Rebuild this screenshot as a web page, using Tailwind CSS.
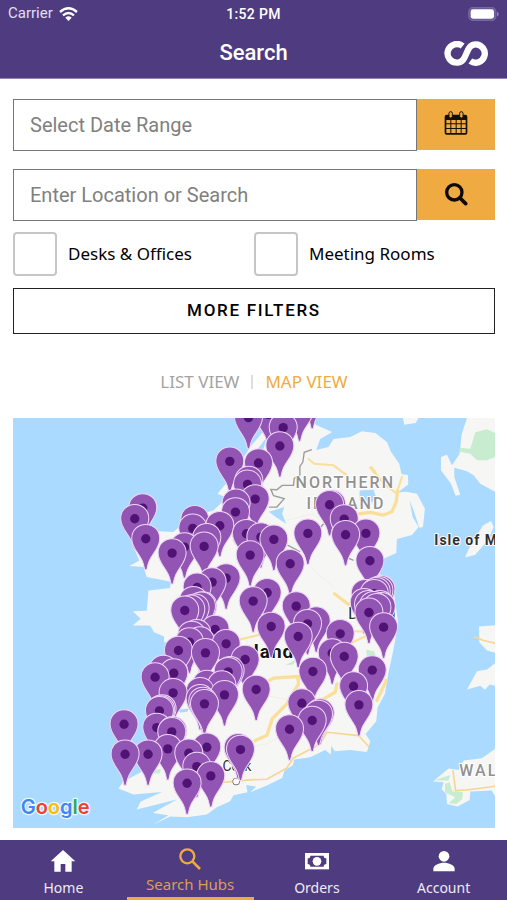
<!DOCTYPE html>
<html lang="en">
<head>
<meta charset="utf-8">
<meta name="viewport" content="width=device-width, initial-scale=1">
<title>Search</title>
<script src="https://cdn.jsdelivr.net/npm/@tailwindcss/browser@4"></script>
</head>
<body class="flex min-h-screen flex-col bg-white font-['Inter',sans-serif] text-black">

<header class="border-b border-[#8f82b3] bg-[#4f3c80] text-white">
  <div class="grid h-7 grid-cols-3 items-center pr-2 pl-2 text-sm">
    <div class="flex items-center gap-1.5 text-[#e3dff0]">
      <span class="font-['Roboto',sans-serif] text-[15px]">Carrier</span>
      <svg class="h-3.5 w-[19px]" viewBox="0 0 57 42" aria-label="Wi-Fi">
        <g fill="none" stroke="#fff" stroke-width="7"><path d="M3 15Q28.500-7 54 15"/><path d="M12 25Q28.500 11 45 25"/></g>
        <path d="M19 32Q28.500 24 38 32L28.500 42Z" fill="#fff"/>
      </svg>
    </div>
    <span class="text-center font-['Roboto',sans-serif] font-medium tracking-wide">1:52 PM</span>
    <svg class="h-3.5 w-[31px] justify-self-end" viewBox="0 0 93 42" aria-label="Battery">
      <rect x="2" y="1" width="82" height="40" rx="13" fill="#6a5a95" stroke="#8679a9" stroke-width="2"/>
      <rect x="8" y="7" width="70" height="28" rx="7" fill="#fff"/>
      <path d="M87 14Q92 16 92 21T87 28Z" fill="#9186b1"/>
    </svg>
  </div>
  <div class="grid h-[50px] grid-cols-3 items-center px-[18px]">
    <h1 class="col-start-2 text-center font-['Roboto',sans-serif] text-[22px] leading-7 font-medium">Search</h1>
    <svg class="h-[25px] w-[45px] justify-self-end" viewBox="0 0 135 75" fill="none" stroke="#fff" stroke-width="19" aria-label="Logo">
      <path d="M56 15A28 28 0 1 0 40 65C72 65 62 10 95 10A27.500 27.500 0 1 1 79 60"/>
    </svg>
  </div>
</header>

<main class="flex-1 pt-5 pr-3 pb-3 pl-[13px]">
  <form class="flex flex-col" onsubmit="return false">
    <div class="flex h-[52px]">
      <input aria-label="Select Date Range" placeholder="Select Date Range" class="min-w-0 flex-1 border border-[#777] px-4 font-['Roboto',sans-serif] text-[20px] outline-none placeholder:text-[#808080]">
      <button type="button" aria-label="Open calendar" class="mb-px flex w-[78px] items-center justify-center bg-[#efab41] pb-1">
        <svg class="size-6" viewBox="0 0 72 72">
          <rect x="2" y="11" width="68" height="60" rx="6" fill="#151006"/>
          <path d="M7 27H19V37H7ZM22 27H35V37H22ZM38 27H50V37H38ZM53 27H65V37H53ZM7 40H19V51H7ZM22 40H35V51H22ZM38 40H50V51H38ZM53 40H65V51H53ZM7 54H19V66H7ZM22 54H35V66H22ZM38 54H50V66H38ZM53 54H65V66H53Z" fill="#efab41"/>
          <g fill="#efab41" stroke="#151006" stroke-width="3"><rect x="15" y="2" width="10" height="19" rx="5"/><rect x="47" y="2" width="10" height="19" rx="5"/></g>
        </svg>
      </button>
    </div>
    <div class="mt-[18px] flex h-[52px]">
      <input aria-label="Enter Location or Search" placeholder="Enter Location or Search" class="min-w-0 flex-1 border border-[#777] px-4 font-['Roboto',sans-serif] text-[20px] outline-none placeholder:text-[#808080]">
      <button type="submit" aria-label="Search" class="mb-px flex w-[78px] items-center justify-center bg-[#efab41] pb-0.5">
        <svg class="size-6" viewBox="0 0 72 72" fill="none" stroke="#0d0a04"><circle cx="31" cy="31" r="23" stroke-width="10"/><path d="M48 48L65 65" stroke-width="11" stroke-linecap="round"/></svg>
      </button>
    </div>
    <div class="mt-[11px] grid grid-cols-2 font-['Noto_Sans',sans-serif] text-[17px]">
      <label class="flex items-center gap-[11px]"><input type="checkbox" class="size-11 appearance-none rounded-[4px] border-2 border-[#c6c6c6] bg-white checked:bg-[#4f3c80]">Desks &amp; Offices</label>
      <label class="flex items-center gap-[11px]"><input type="checkbox" class="size-11 appearance-none rounded-[4px] border-2 border-[#c6c6c6] bg-white checked:bg-[#4f3c80]">Meeting Rooms</label>
    </div>
    <button type="button" class="mt-3 h-[46px] border border-[#222] font-['Roboto',sans-serif] text-[17px] font-medium tracking-widest">MORE FILTERS</button>
  </form>

  <div class="mt-9 flex h-6 items-center justify-center font-['Noto_Sans',sans-serif] text-[17px]">
    <a href="#list" class="text-[#a3a3a3]">LIST VIEW</a>
    <span class="mx-3 h-3.5 w-0.5 bg-[#dedede]"></span>
    <a href="#map" class="text-[#efab41]">MAP VIEW</a>
  </div>

  <section id="map" class="mt-6" aria-label="Map of hubs">
    <svg class="block w-full" viewBox="39 23 1445 1230">
      <defs>
        <g id="pin">
          <path d="M0-43C24-43 42-25 42-1C42 26 22 42 11 65C6 76 5 84 3 93H-3C-5 84-6 76-11 65C-22 42-42 26-42-1C-42-25-24-43 0-43Z" fill="#9355b3" stroke="#eed8f7" stroke-width="3"/>
          <circle r="14" fill="#501375"/>
        </g>
      </defs>
      <rect x="39" y="23" width="1445" height="1230" fill="#aadaff"/>
      <g fill="#f6f6f5">
        <path d="M830 23H932L948 44L996 65L960 86L948 119L985 110L1000 86L1050 80L1085 63L1125 68L1160 95L1172 124L1197 160L1204 192L1223 194L1224 222L1192 246L1216 244L1250 250L1274 295L1268 350L1257 352L1240 300L1228 270L1237 320L1255 350L1235 374L1190 386L1188 428L1150 445L1138 490L1180 540L1194 640L1178 725L1164 790L1154 850L1132 892L1128 932L1096 970L1110 992L1100 1024L1050 1018L1004 1022L993 1006L992 1032L975 1018L930 1040L882 1047L878 1064L853 1080L846 1102L800 1125L750 1145L768 1128L738 1123L742 1145L700 1154L690 1172L650 1190L620 1212L560 1220L510 1218L460 1242L505 1214L458 1207L530 1167L410 1197L422 1173L486 1144L400 1152L355 1134L370 1113L432 1080L440 990L450 920L470 870L480 790L525 720L540 680L492 696L492 678L462 665L450 645L398 645L422 625L398 602L440 601L445 540L510 533L512 514L440 500L430 470L388 467L418 450L402 415L430 360L520 365L570 320L640 300L680 262L652 250L690 205L750 110L800 50Z"/>
        <path d="M1208 23H1255L1246 38L1212 43ZM1400 23H1484V244L1440 220L1420 195L1400 183L1362 172L1362 200L1380 253L1366 256L1352 220L1322 180L1322 140L1340 133L1355 165L1378 130L1384 72Z"/>
        <path d="M1472 332L1480 350L1462 390L1424 434L1394 441L1410 405L1448 345ZM1436 648L1484 644V727L1460 720L1437 695ZM1484 758V826L1468 822L1454 838L1440 826L1400 837L1430 782L1460 777ZM1484 1015V1157L1474 1140L1410 1143L1408 1168L1372 1188L1340 1180L1338 1150L1324 1136L1330 1115L1298 1113L1345 1074L1375 1078L1390 1050L1444 1043Z"/>
      </g>
      <g fill="#c8ecd0">
        <path d="M1425 66L1460 57L1484 68V140L1460 150L1430 150L1410 130L1378 124V112L1410 115ZM1300 1110L1350 1093L1344 1110ZM1334 1120L1348 1115L1356 1142L1388 1145L1386 1165L1368 1180L1345 1178L1365 1160L1334 1145ZM1098 718L1122 722L1128 745L1100 738ZM855 764L886 748L880 762ZM480 430L508 446L500 462L484 450ZM440 1080L482 1076L480 1088L440 1090Z"/>
      </g>
      <g fill="#aadaff">
        <path d="M1078 240L1120 238L1128 262L1110 280L1078 270ZM806 304L852 290L846 310L858 340L830 322ZM750 145L800 80L790 115L760 140ZM535 898L566 894L562 904L540 906Z"/>
      </g>
      <g fill="none" stroke="#f1eadd" stroke-width="2">
        <path d="M860 330L940 310L980 350L1110 430M690 380L820 560L940 620L1040 660M930 470L1000 530M640 620L740 690L740 800L690 870M860 860L960 860M680 1020L800 1000L870 960M770 850L880 870"/>
      </g>
      <g fill="none" stroke="#f9df99" stroke-linejoin="round" stroke-linecap="round">
        <path stroke-width="10" d="M1112 172L1124 186M1003 550L1045 582M1078 310L1110 306L1150 314L1175 304L1188 274L1192 240M765 990L800 975L816 925L860 880L895 820L893 798L820 803L790 818M1158 810L1130 870M1010 820L1005 845L970 865"/>
        <path stroke-width="6" d="M925 146L942 160L1000 165L1040 195M1124 186L1150 220L1190 250M716 688L790 670M1065 662L1100 664M1056 696L1098 676M1192 240L1205 200"/>
        <path stroke-width="5" stroke="#f7d694" d="M660 1116L750 1108L800 1106L860 1072L880 1042L960 1000L980 965L1075 975L1105 1008M1358 1080L1366 1140L1400 1138L1440 1133L1484 1127M1424 680L1450 690L1484 698"/>
      </g>
      <path d="M935 118L912 126L908 155L899 168V194L882 204L880 225L846 225L830 238L812 237L820 256L852 265L830 290L806 290M970 340L960 352M862 404L900 424M1046 444L1060 450" fill="none" stroke="#9b9b9b" stroke-width="4"/>
      <g class="font-['Roboto',sans-serif]" stroke="#fff" stroke-width="6" stroke-linejoin="round" paint-order="stroke">
        <g fill="#919191" font-size="48" font-weight="500" letter-spacing="6">
          <text x="886" y="234">NORTHERN</text>
          <text x="919" y="296">IRELAND</text>
          <text x="1377" y="1095">WALES</text>
        </g>
        <g fill="#303030">
          <text x="1302" y="405" font-size="42" font-weight="700" letter-spacing="3">Isle of Man</text>
          <text x="1043" y="627" font-size="51">Dublin</text>
          <text x="684" y="742" font-size="57" font-weight="700" letter-spacing="3" fill="#151515">Ireland</text>
          <text x="667" y="1080" font-size="42">Cork</text>
          <circle cx="708" cy="1113" r="9" fill="#fff" stroke="#555" stroke-width="4"/>
        </g>
      </g>
      <g id="pins"></g>
      <text x="62" y="1210" font-size="60" font-weight="600" class="font-['Inter',sans-serif]" stroke="#e9f5ff" stroke-width="8" paint-order="stroke" stroke-linejoin="round"><tspan fill="#4285f4">G</tspan><tspan fill="#ea4335">o</tspan><tspan fill="#fbbc05">o</tspan><tspan fill="#4285f4">g</tspan><tspan fill="#34a853">l</tspan><tspan fill="#ea4335">e</tspan></text>
    </svg>
  </section>
</main>

<nav class="sticky bottom-0 grid h-[60px] grid-cols-4 bg-[#4f3c80] font-['Noto_Sans',sans-serif] text-sm text-[#eeeaf6]">
  <a href="#home" class="flex flex-col items-center pt-2.5">
    <svg class="h-[22px] w-6" viewBox="0 0 72 66" fill="#fff"><path d="M36 0L73 34H62V65H43V42H29V65H10V34H-1Z"/></svg>
    <span class="mt-1 leading-6">Home</span>
  </a>
  <a href="#search" class="flex flex-col items-center border-b-3 border-[#efab41] pt-2 text-[15px] text-[#dd9c59]">
    <svg class="h-[22px] w-[22px]" viewBox="0 0 66 66" fill="none" stroke="#efab41" stroke-width="7"><circle cx="25" cy="25" r="21"/><path d="M41 41L63 63" stroke-width="8"/></svg>
    <span class="mt-1 leading-5">Search Hubs</span>
  </a>
  <a href="#orders" class="flex flex-col items-center pt-2.5">
    <svg class="h-[22px] w-6" viewBox="0 0 72 66"><path d="M0 9H72V58H0Z" fill="#fff"/><path d="M16 17H56Q56 25 64 25V42Q56 42 56 50H16Q16 42 8 42V25Q16 25 16 17Z" fill="#4f3c80"/><ellipse cx="36" cy="34" rx="13" ry="13" fill="#fff"/></svg>
    <span class="mt-1 leading-6">Orders</span>
  </a>
  <a href="#account" class="flex flex-col items-center pt-2.5">
    <svg class="h-[22px] w-[22px]" viewBox="0 0 66 66" fill="#fff"><circle cx="33" cy="19" r="16"/><path d="M1 64V56C1 45 19 38 33 38S65 45 65 56V64Z"/></svg>
    <span class="mt-1 leading-6">Account</span>
  </a>
</nav>

<script>
  // Hub positions in map units; southern pins are painted over northern ones.
  const hubs = [[936,-38],[898,0],[805,12],[745,22],[849,52],[839,107],[689,153],[775,158],[746,211],[742,222],[765,266],[708,279],[706,305],[994,282],[988,283],[428,293],[404,325],[1032,326],[584,328],[659,346],[578,354],[1097,369],[923,369],[739,370],[1036,373],[782,380],[620,382],[437,385],[821,387],[553,410],[612,408],[516,428],[750,434],[1109,451],[870,460],[678,503],[636,515],[591,531],[1142,538],[1136,541],[1095,550],[1128,544],[1122,550],[801,547],[580,571],[759,572],[1092,577],[1105,583],[1138,583],[1143,589],[1120,586],[1130,592],[608,587],[604,588],[888,587],[585,594],[572,597],[554,600],[1106,606],[948,632],[922,640],[813,648],[1150,650],[645,657],[590,670],[575,675],[1020,670],[600,692],[568,695],[894,678],[678,700],[535,720],[616,727],[996,728],[1032,738],[735,747],[490,777],[1116,779],[690,781],[684,784],[938,783],[521,788],[465,800],[620,822],[665,824],[1060,827],[768,837],[600,844],[519,847],[673,853],[600,865],[608,873],[613,880],[905,878],[1076,883],[486,896],[482,899],[478,901],[960,908],[955,912],[936,930],[372,941],[470,951],[518,961],[515,964],[868,956],[620,1010],[714,1012],[503,1015],[721,1017],[566,1028],[444,1031],[375,1031],[590,1068],[632,1096],[561,1118]];
  document.getElementById('pins').innerHTML = hubs.map(([x, y]) => `<use href="#pin" x="${x}" y="${y}"/>`).join('');
</script>
</body>
</html>
